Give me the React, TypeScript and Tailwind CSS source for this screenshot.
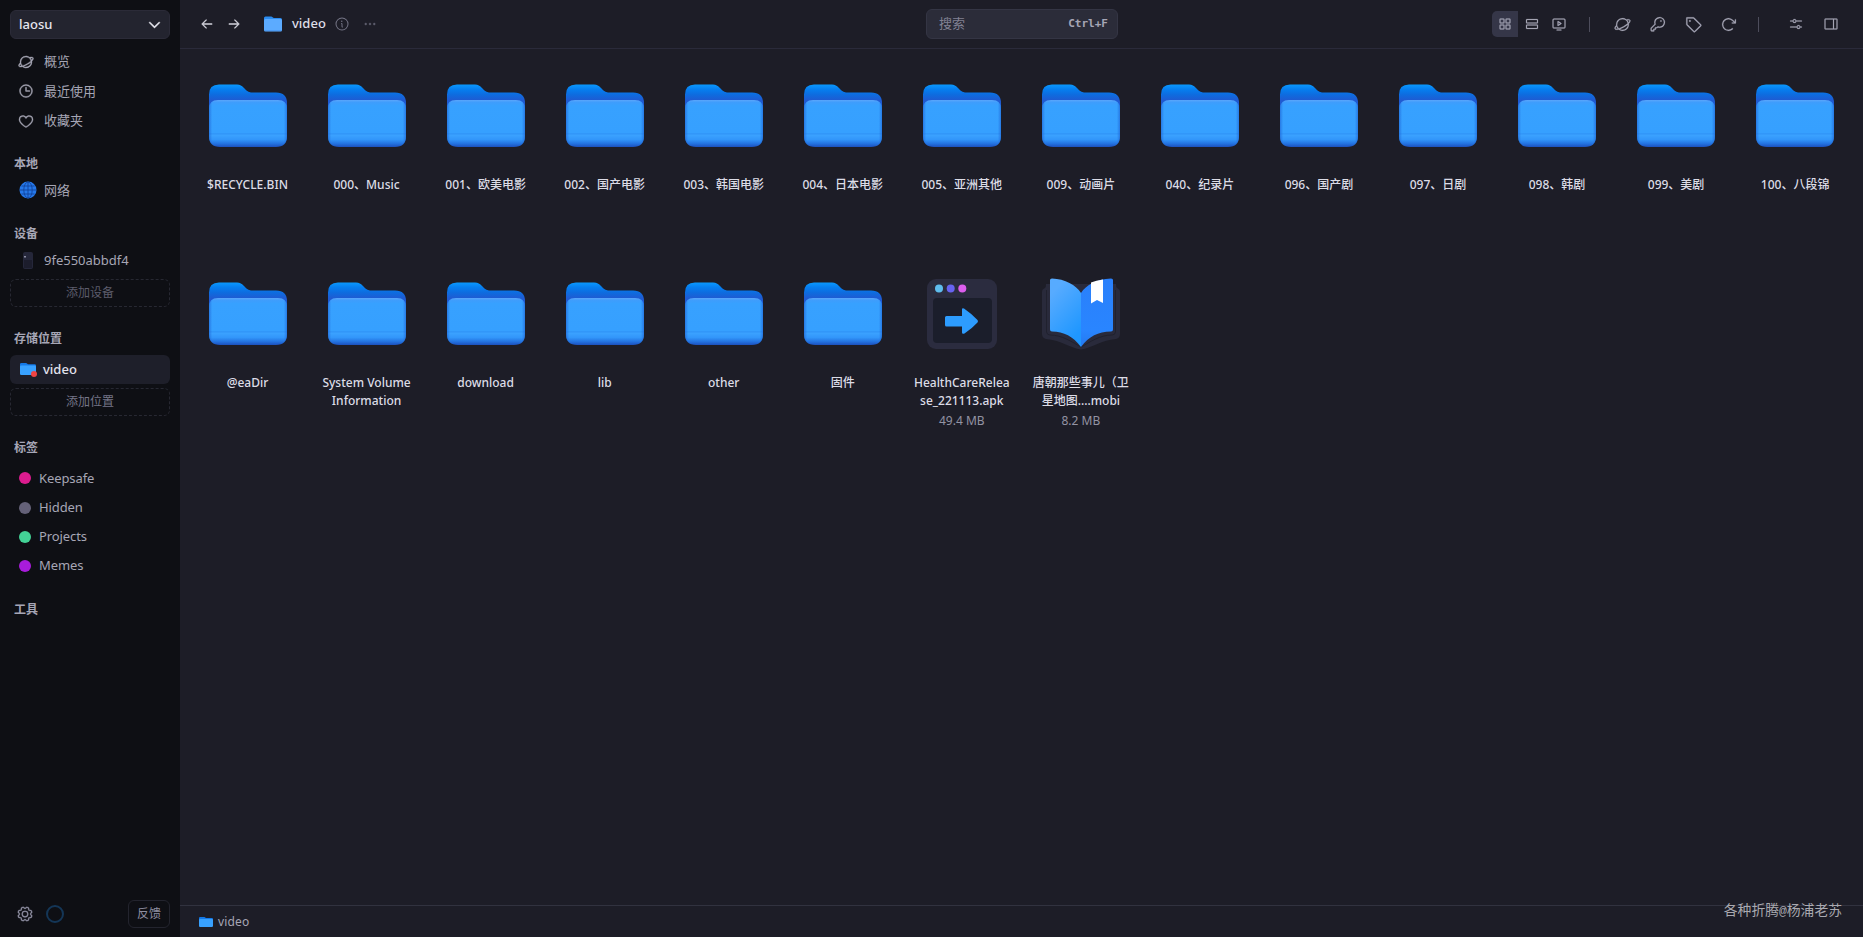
import React from "react";
import {
  PiPlanet, PiClock, PiHeart, PiArrowLeft, PiArrowRight, PiInfo, PiDotsThreeBold, PiSquaresFour, PiRows,
  PiMonitorPlay, PiKey, PiTag, PiArrowClockwise, PiSlidersHorizontal, PiSidebarSimple, PiGear, PiCaretDownBold,
} from "react-icons/pi";

function FolderDefs() {
  return (
    <svg width="0" height="0" className="absolute" aria-hidden="true">
      <defs>
        <linearGradient id="back" x1="0" y1="0" x2="0" y2="1">
          <stop offset="0" stopColor="#0a98fd" />
          <stop offset="0.12" stopColor="#067ff0" />
          <stop offset="0.25" stopColor="#0d6de0" />
          <stop offset="0.4" stopColor="#1f5bd2" />
          <stop offset="1" stopColor="#1f5bd2" />
        </linearGradient>
        <linearGradient id="front" x1="0" y1="0" x2="0" y2="1">
          <stop offset="0" stopColor="#5aa6fb" />
          <stop offset="0.05" stopColor="#3f9dfc" />
          <stop offset="0.12" stopColor="#37a1ff" />
          <stop offset="0.7" stopColor="#36a0ff" />
          <stop offset="0.72" stopColor="#2f92f6" />
          <stop offset="0.745" stopColor="#3ba2ff" />
          <stop offset="0.84" stopColor="#3296fa" />
          <stop offset="0.93" stopColor="#2372e0" />
          <stop offset="1" stopColor="#1c50bd" />
        </linearGradient>
        <linearGradient id="edge" x1="0" y1="0" x2="1" y2="0">
          <stop offset="0" stopColor="#1c5fd2" stopOpacity="0.6" />
          <stop offset="0.04" stopColor="#1c5fd2" stopOpacity="0" />
          <stop offset="0.96" stopColor="#1c5fd2" stopOpacity="0" />
          <stop offset="1" stopColor="#1c5fd2" stopOpacity="0.6" />
        </linearGradient>
      </defs>
    </svg>
  );
}

function Folder({ className }: { className: string }) {
  return (
    <svg viewBox="0 0 78 63" className={className} preserveAspectRatio="none">
      <path d="M0 10.500Q0 0.500 10 0.500H28C31 0.500 33 1.700 35 4L37.500 6.600Q39.200 8.400 42 8.400H67Q78 8.400 78 19V40H0Z" fill="url(#back)" />
      <path d="M0 25Q0 16 9 16H69Q78 16 78 25V52Q78 63 67 63H11Q0 63 0 52Z" fill="url(#front)" />
      <path d="M0 25Q0 16 9 16H69Q78 16 78 25V52Q78 63 67 63H11Q0 63 0 52Z" fill="url(#edge)" />
    </svg>
  );
}

function MiniFolder({ className }: { className: string }) {
  return (
    <svg viewBox="0 0 18 15" className={className} preserveAspectRatio="none">
      <path d="M0 1.500Q0 0 1.500 0H7L9 1.500H16.500Q18 1.500 18 3V8H0Z" fill="#1478e6" />
      <path d="M0 4.500Q0 3 1.500 3H16.500Q18 3 18 4.500V13.500Q18 15 16.500 15H1.500Q0 15 0 13.500Z" fill="#38a1ff" />
    </svg>
  );
}

function HeaderFolder() {
  return (
    <svg viewBox="0 0 18 16" className="ml-[23px] h-[16px] w-[18px]">
      <path d="M0 2Q0 0.500 1.500 0.500H7.200Q8 0.500 8.600 1.200T10 2H16.500Q18 2 18 3.500V8H0Z" fill="#2b8cf0" />
      <path d="M0 4.500Q0 3 1.500 3H16.500Q18 3 18 4.500V14Q18 15.500 16.500 15.500H1.500Q0 15.500 0 14Z" fill="#5cabff" />
      <path d="M0.500 14.600H17.500" stroke="#4796ee" strokeWidth="0.800" />
    </svg>
  );
}

function AppIcon() {
  return (
    <svg viewBox="0 0 70 70" className="mt-[2px] h-[70px] w-[70px]">
      <rect width="70" height="70" rx="9" fill="#2b2c3f" />
      <rect x="6" y="19" width="59" height="45" rx="4" fill="#1b1e2b" />
      <circle cx="12" cy="9.500" r="4" fill="#5fbdee" />
      <circle cx="23.700" cy="9.500" r="4" fill="#6763f0" />
      <circle cx="35.300" cy="9.500" r="4" fill="#dc5eee" />
      <path d="M18 38.500Q18 37 19.500 37H35V30.500Q35 28.500 37 29.500Q45 35 50.500 41Q51.500 42 50.500 43.500Q45 49.500 37.500 54.500Q35 55.500 35 53.500V47.500H19.500Q18 47.500 18 46Z" fill="#2d9cfe" />
    </svg>
  );
}

function BookIcon() {
  return (
    <svg viewBox="0 0 78 72" className="mt-[2px] h-[72px] w-[78px]">
      <defs>
        <linearGradient id="pageL" x1="0" y1="0" x2="0.5" y2="1">
          <stop offset="0.2" stopColor="#57abff" />
          <stop offset="1" stopColor="#1f97ff" />
        </linearGradient>
        <linearGradient id="pageR" x1="0" y1="0" x2="0" y2="1">
          <stop offset="0" stopColor="#2a80fb" />
          <stop offset="0.75" stopColor="#2985ff" />
          <stop offset="1" stopColor="#2479f0" />
        </linearGradient>
      </defs>
      <path d="M4 6H74Q74 9 75 10Q78 11 78 14V56Q78 60 74 61C60 62 50 70 39 71.500C28 70 18 62 4 61Q0 60 0 56V14Q0 11 3 10Q4 9 4 6Z" fill="#292a3b" />
      <path d="M4.500 12V54Q5 57 8 57C20 57 30 64 39 69C48 64 58 57 70 57Q73 57 73.500 54V12" fill="none" stroke="#20212e" strokeWidth="1" />
      <path d="M8 2Q8 0.500 10 0.500C23 1 34 7 39 15V69C31 58 22 54 10 53.500Q8 53.500 8 51.500Z" fill="url(#pageL)" />
      <path d="M71 2Q71 0.500 69 0.500C55 1 44 7 39 15V69C47 58 56 54 69 53.500Q71 53.500 71 51.500Z" fill="url(#pageR)" />
      <path d="M49 4.500Q54 2.500 61 1.500V25L55 22L49 25.500Z" fill="#fff" />
    </svg>
  );
}

function Globe() {
  return (
    <svg viewBox="0 0 18 18" className="h-[18px] w-[18px]">
      <circle cx="9" cy="9" r="8.500" fill="#2578ea" />
      <g fill="none" stroke="#12449c" strokeWidth="0.900">
        <ellipse cx="9" cy="9" rx="4.200" ry="8" />
        <path d="M9 1V17M1 9H17M2.500 5H15.500M2.500 13H15.500" />
      </g>
    </svg>
  );
}

const folders: string[] = [
  "$RECYCLE.BIN", "000、Music", "001、欧美电影", "002、国产电影", "003、韩国电影", "004、日本电影", "005、亚洲其他",
  "009、动画片", "040、纪录片", "096、国产剧", "097、日剧", "098、韩剧", "099、美剧", "100、八段锦",
  "@eaDir", "System Volume Information", "download", "lib", "other", "固件",
];

function Cell({ icon, lines, size }: { icon: React.ReactNode; lines: string[]; size?: string }) {
  return (
    <div className="flex h-[198px] w-[119.06px] flex-col items-center">
      <div className="flex h-[104px] items-center justify-center">{icon}</div>
      <div className="mt-[9px] w-[100px] text-center text-[12px] leading-[18px] font-medium text-[#dcdce6]">
        {lines.map((l) => (
          <div key={l} className="whitespace-nowrap">{l}</div>
        ))}
      </div>
      {size && <div className="mt-[3px] text-[12px] leading-[16px] text-[#9393a3]">{size}</div>}
    </div>
  );
}

function Heading({ children, className }: { children: React.ReactNode; className: string }) {
  return <div className={`pl-[14px] text-[12px] leading-[16px] font-bold text-[#a6a6b6] ${className}`}>{children}</div>;
}

function NavItem({ icon, label }: { icon: React.ReactNode; label: string }) {
  return (
    <div className="flex h-[29.300px] items-center pl-[18px] text-[13px] text-[#a6a6b5]">
      <span className="flex w-[26px] shrink-0 items-center">{icon}</span>
      {label}
    </div>
  );
}

function AddBox({ children, className }: { children: React.ReactNode; className: string }) {
  return (
    <div className={`mx-[10px] flex h-[28px] items-center justify-center rounded-[6px] border border-dashed border-[#272832] text-[12px] ${className}`}>
      {children}
    </div>
  );
}

function Tag({ dot, label }: { dot: string; label: string }) {
  return (
    <div className="flex h-[29.200px] items-center gap-[8px] pl-[19px] text-[13px] tracking-[-0.1px] text-[#a6a6b5]">
      <span className={`h-[12px] w-[12px] rounded-full ${dot}`} />
      {label}
    </div>
  );
}

export default function App() {
  return (
    <div className="flex h-[937px] w-[1863px] overflow-hidden bg-[#1d1d27] font-['Noto_Sans','Noto_Sans_CJK_SC',sans-serif] text-[13px]">
      <FolderDefs />
      <aside className="flex w-[180px] shrink-0 flex-col bg-[#0e0f14] pt-[10px]">
        <div className="mx-[10px] flex h-[29px] items-center justify-between rounded-[6px] border border-[#2b2b38] bg-[#23242f] pr-[7px] pl-[8px] text-[13px] font-medium text-[#e6e6ee]">
          laosu
          <PiCaretDownBold className="h-[15px] w-[15px]" strokeWidth={6} />
        </div>
        <nav className="mt-[8.5px]">
          <NavItem icon={<PiPlanet className="h-[16px] w-[16px]" strokeWidth={6} />} label="概览" />
          <NavItem icon={<PiClock className="h-[16px] w-[16px]" strokeWidth={6} />} label="最近使用" />
          <NavItem icon={<PiHeart className="h-[16px] w-[16px]" strokeWidth={6} />} label="收藏夹" />
        </nav>
        <Heading className="mt-[20.5px]">本地</Heading>
        <div className="mt-[4px] flex h-[29px] items-center gap-[7px] pl-[19px] text-[#a6a6b5]"><Globe />网络</div>
        <Heading className="mt-[21px]">设备</Heading>
        <div className="mt-[4px] flex h-[29px] items-center pl-[23px] text-[#a6a6b5]">
          <svg viewBox="0 0 10 17" className="mr-[11px] h-[17px] w-[10px]">
            <rect width="10" height="17" rx="2" fill="#25273a" />
            <rect x="1" y="8" width="8" height="8" fill="#1c1d2c" />
            <rect x="1" y="4" width="2" height="1.500" fill="#8e90a4" />
          </svg>
          <span>9fe550abbdf4</span>
        </div>
        <AddBox className="mt-[4px] text-[#5c5c6b]">添加设备</AddBox>
        <Heading className="mt-[24px]">存储位置</Heading>
        <div className="mx-[10px] mt-[8px] flex h-[29px] items-center rounded-[6px] bg-[#1e1f2a] pl-[10px] font-medium text-[#e2e2ec]">
          <span className="relative mr-[7px] h-[13px] w-[16px]">
            <MiniFolder className="h-[12px] w-[16px]" />
            <span className="absolute -right-[1px] -bottom-[1px] h-[6px] w-[6px] rounded-full bg-[#ee4444]" />
          </span>
          video
        </div>
        <AddBox className="mt-[4px] text-[#757587]">添加位置</AddBox>
        <Heading className="mt-[24px]">标签</Heading>
        <div className="mt-[8px]">
          <Tag dot="bg-[#dc1c8f]" label="Keepsafe" />
          <Tag dot="bg-[#646178]" label="Hidden" />
          <Tag dot="bg-[#43d296]" label="Projects" />
          <Tag dot="bg-[#a81cdb]" label="Memes" />
        </div>
        <Heading className="mt-[21px]">工具</Heading>
        <div className="mt-auto mb-[9px] flex h-[28px] items-center pr-[10px] pl-[16px]">
          <PiGear className="h-[18px] w-[18px] text-[#8d8da0]" strokeWidth={3} />
          <span className="ml-[12px] h-[18px] w-[18px] rounded-full border-2 border-[#143657]" />
          <span className="ml-auto flex h-[28px] w-[42px] items-center justify-center rounded-[6px] border border-[#23242e] text-[12px] text-[#8d8da0]">反馈</span>
        </div>
      </aside>

      <main className="flex min-w-0 flex-1 flex-col">
        <header className="flex h-[49px] shrink-0 items-center border-b border-[#2a2a3a]">
          <div className="flex w-[745px] items-center pl-[20px] text-[#dedee8]">
            <PiArrowLeft className="h-[14px] w-[14px]" strokeWidth={8} />
            <PiArrowRight className="ml-[13px] h-[14px] w-[14px]" strokeWidth={8} />
            <HeaderFolder />
            <span className="ml-[10px] text-[13px] font-medium">video</span>
            <PiInfo className="ml-[8px] h-[16px] w-[16px] text-[#757586]" />
            <PiDotsThreeBold className="ml-[12px] h-[16px] w-[16px] text-[#606070]" strokeWidth={6} />
          </div>
          <div className="ml-[1px] flex h-[30px] w-[192px] items-center justify-between rounded-[6px] border border-[#343544] bg-[#2b2c39] pr-[9px] pl-[12px]">
            <span className="text-[#818193]">搜索</span>
            <span className="font-['DejaVu_Sans_Mono',monospace] text-[11px] font-bold text-[#a6a6b5]">Ctrl+F</span>
          </div>
          <div className="ml-auto flex items-center pr-[24px] text-[#a5a5b5]">
            <span className="flex h-[26px] w-[26px] items-center justify-center rounded-l-[5px] bg-[#353648]"><PiSquaresFour className="h-[16px] w-[16px]" strokeWidth={3} /></span>
            <PiRows className="ml-[6px] h-[16px] w-[16px]" strokeWidth={3} />
            <PiMonitorPlay className="ml-[11px] h-[16px] w-[16px]" strokeWidth={3} />
            <span className="ml-[22px] h-[15px] w-px bg-[#4d4d5c]" />
            <PiPlanet className="ml-[24px] h-[17px] w-[17px]" strokeWidth={3} />
            <PiKey className="ml-[18px] h-[17px] w-[17px]" strokeWidth={3} />
            <PiTag className="ml-[18px] h-[18px] w-[18px]" strokeWidth={3} />
            <PiArrowClockwise className="ml-[18px] h-[17px] w-[17px]" strokeWidth={3} />
            <span className="ml-[21px] h-[15px] w-px bg-[#4d4d5c]" />
            <PiSlidersHorizontal className="ml-[29px] h-[16px] w-[16px]" strokeWidth={3} />
            <PiSidebarSimple className="ml-[19px] h-[16px] w-[16px] -scale-x-100" strokeWidth={3} />
          </div>
        </header>

        <div className="flex flex-1 flex-wrap content-start pt-[14px] pl-[8px]">
          {folders.map((name) => (
            <Cell
              key={name}
              icon={<Folder className="h-[63px] w-[78px]" />}
              lines={name === "System Volume Information" ? ["System Volume", "Information"] : [name]}
            />
          ))}
          <Cell icon={<AppIcon />} lines={["HealthCareRelea", "se_221113.apk"]} size="49.4 MB" />
          <Cell icon={<BookIcon />} lines={["唐朝那些事儿（卫", "星地图....mobi"]} size="8.2 MB" />
        </div>

        <footer className="relative flex h-[32px] shrink-0 items-center border-t border-[#31323f] pl-[19px] text-[12px] text-[#a6a6b5]">
          <MiniFolder className="mr-[5px] h-[10px] w-[14px]" />
          <span className="tracking-[0.15px]">video</span>
          <span className="absolute -top-[7px] right-[21px] font-['Noto_Sans_CJK_SC',sans-serif] text-[13.8px] leading-[20px] text-[#a9a9b0]">
            各种折腾<span className="font-['Liberation_Mono',monospace] text-[13px]">@</span>杨浦老苏
          </span>
        </footer>
      </main>
    </div>
  );
}
